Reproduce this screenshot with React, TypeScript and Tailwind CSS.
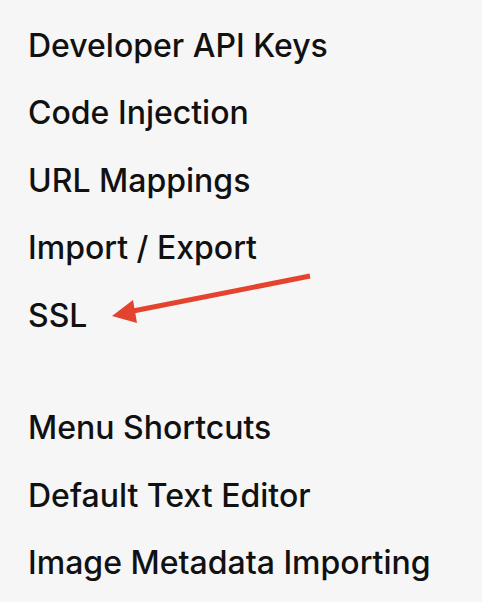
const TOP_ITEMS = ['Developer API Keys', 'Code Injection', 'URL Mappings', 'Import / Export', 'SSL'];
const BOTTOM_ITEMS = ['Menu Shortcuts', 'Default Text Editor', 'Image Metadata Importing'];

function Item({ label }: { label: string }) {
  return (
    <li className="h-[67.5px] flex items-center text-[32px] font-medium text-[#111111]">
      {label}
    </li>
  );
}

export default function App() {
  return (
    <main
      className="relative w-[482px] h-[602px] bg-[#f6f6f6] overflow-hidden pl-[28px] pt-[12px]"
      style={{ fontFamily: 'Inter, "Noto Sans", sans-serif' }}
    >
      <ul>
        {TOP_ITEMS.map(i => <Item key={i} label={i} />)}
      </ul>
      <ul className="mt-[45px]">
        {BOTTOM_ITEMS.map(i => <Item key={i} label={i} />)}
      </ul>

      {/* annotation arrow */}
      <svg className="absolute left-0 top-0 pointer-events-none" width="482" height="602" viewBox="0 0 482 602">
        <line x1="310" y1="276" x2="128" y2="312" stroke="#e4432d" strokeWidth="5" />
        <polygon points="112,316 133,300 137,323" fill="#e4432d" />
      </svg>
    </main>
  );
}
